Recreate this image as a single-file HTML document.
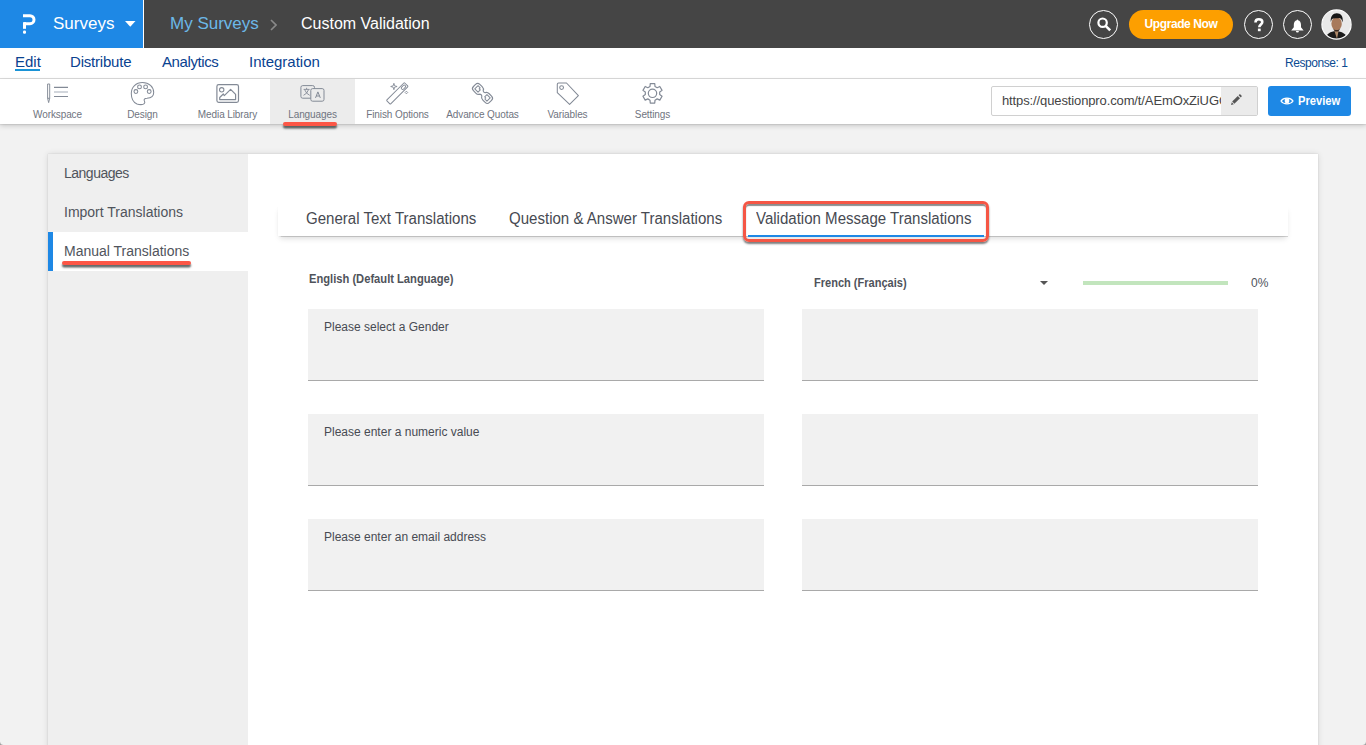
<!DOCTYPE html>
<html><head><meta charset="utf-8">
<style>
*{margin:0;padding:0;box-sizing:border-box}
html,body{width:1366px;height:745px;overflow:hidden;background:#f2f2f2;font-family:"Liberation Sans",sans-serif;position:relative}
.abs{position:absolute}
#top{left:0;top:0;width:1366px;height:48px;background:#454545}
#brand{left:0;top:0;width:143px;height:48px;background:#1e88e5}
#sep{left:143px;top:0;width:1px;height:48px;background:#fff}
.t{position:absolute;white-space:nowrap;line-height:1}
#nav{left:0;top:48px;width:1366px;height:31px;background:#fff;border-bottom:1px solid #dcdcdc}
#tool{left:0;top:79px;width:1366px;height:45px;background:#fff;box-shadow:0 1px 1px rgba(0,0,0,.07), 0 2px 5px rgba(0,0,0,.16)}
.navt{color:#0a4290;font-size:15px}
.ti{position:absolute;top:0;width:85px;height:45px;text-align:center}
.ti .lbl{position:absolute;left:0;width:85px;top:31px;font-size:10px;letter-spacing:-0.1px;color:#6f7480;text-align:center;line-height:1}
.ti svg{position:absolute;left:0;top:0}
#card{left:48px;top:154px;width:1270px;height:600px;background:#fff;box-shadow:0 0 1px rgba(0,0,0,.18), 0 0 6px rgba(0,0,0,.12)}
#side{left:48px;top:154px;width:200px;height:600px;background:#efefef}
.si{font-size:14px;color:#50545c}
.box{position:absolute;width:456px;height:72px;background:#f1f1f1;border-bottom:1px solid #a9a9a9}
.bt{position:absolute;left:16px;top:12px;font-size:12px;color:#484b53;line-height:1}
.redline{position:absolute;height:4px;background:#fc5646;border-radius:2px;box-shadow:0 2.5px 2px rgba(40,50,50,.75)}
</style></head>
<body>
<div id="top" class="abs"></div>
<div id="brand" class="abs"></div>
<div id="sep" class="abs"></div>
<!-- logo P -->
<svg class="abs" style="left:0;top:0" width="40" height="40" viewBox="0 0 40 40">
<path d="M23 15.7 H30 A4 4 0 0 1 30 23.7 H24" fill="none" stroke="#fff" stroke-width="3"/>
<rect x="23" y="22.2" width="3" height="6.6" fill="#fff"/>
<rect x="23" y="30.6" width="3" height="3.2" rx="1.2" fill="#fff"/>
</svg>
<div class="t" style="left:53px;top:15px;font-size:17px;color:#fff">Surveys</div>
<svg class="abs" style="left:124.5px;top:21px" width="11" height="7"><path d="M0 0 H10.5 L5.25 5.8Z" fill="#fff"/></svg>
<div class="t" style="left:170px;top:15px;font-size:17px;color:#6cb8e8">My Surveys</div>
<svg class="abs" style="left:270px;top:19px" width="7" height="12"><path d="M1 1 L6 6 L1 11" fill="none" stroke="#8a8a8a" stroke-width="1.6"/></svg>
<div class="t" style="left:301px;top:16px;font-size:16px;color:#fff">Custom Validation</div>

<!-- top right -->
<div class="abs" style="left:1089px;top:10px;width:29px;height:29px;border:1.5px solid #fff;border-radius:50%"></div>
<svg class="abs" style="left:1096px;top:16px" width="17" height="17" viewBox="0 0 17 17"><circle cx="6.6" cy="6.7" r="4.2" fill="none" stroke="#fff" stroke-width="2.2"/><path d="M9.4 9.6 L14.2 14.4" stroke="#fff" stroke-width="2.6"/></svg>
<div class="abs" style="left:1129px;top:10px;width:104px;height:29px;border-radius:15px;background:#fd9f00"></div>
<div class="t" style="left:1129px;top:18px;width:104px;text-align:center;font-size:12px;letter-spacing:-0.4px;font-weight:bold;color:#fff">Upgrade Now</div>
<div class="abs" style="left:1244px;top:10px;width:29px;height:29px;border:1.5px solid #fff;border-radius:50%"></div>
<svg class="abs" style="left:1254px;top:18px" width="10" height="14" viewBox="0 0 10 14"><path d="M1.5 4.4 C1.5 2.2 3 1.3 4.8 1.3 C6.8 1.3 8.3 2.4 8.3 4.1 C8.3 6.6 5.3 6.6 5.3 9.3" fill="none" stroke="#fff" stroke-width="2.6"/><rect x="3.9" y="10.6" width="2.8" height="2.6" fill="#fff"/></svg>
<div class="abs" style="left:1283px;top:10px;width:29px;height:29px;border:1.5px solid #fff;border-radius:50%"></div>
<svg class="abs" style="left:1291px;top:18.5px" width="14" height="14" viewBox="0 0 14 14"><path d="M6.4 0.6 C6.8 0.6 7 1 7 1.3 C8.9 1.8 10 3.4 10 6 V8.2 L12.6 11.6 H0.2 L2.8 8.2 V6 C2.8 3.4 3.9 1.8 5.8 1.3 C5.8 1 6 0.6 6.4 0.6Z" fill="#fff"/><path d="M4.9 12 A1.5 1.5 0 0 0 7.9 12Z" fill="#fff"/></svg>
<svg class="abs" style="left:1321px;top:9px" width="31" height="31" viewBox="0 0 31 31">
<defs><clipPath id="avc"><circle cx="15.5" cy="15.5" r="14.5"/></clipPath></defs>
<g clip-path="url(#avc)">
<rect width="31" height="31" fill="#e9e9e9"/>
<path d="M4 31 C5 25 9 22.5 15 22 C21 22.5 26 25 27 31Z" fill="#1b1b1b"/>
<path d="M13.5 22 L17.5 22 L16 30 Z" fill="#b08a6a"/>
<ellipse cx="15.6" cy="14.8" rx="5.2" ry="6.8" fill="#a87a5c"/>
<path d="M9.8 13 C9.2 7 12 4.2 15.8 4.2 C19.8 4.2 22.5 7 21.6 13.5 C20.8 10.5 20 9.5 18.5 9 C16 9.5 12.5 9 11 10 C10.3 11 10.2 12 9.8 13Z" fill="#161616"/>
<path d="M12.3 19.8 C13.5 21.5 17.5 21.5 19 19.8 C18.5 21.8 17 22.6 15.6 22.6 C14.2 22.6 12.8 21.8 12.3 19.8Z" fill="#3a2a20"/>
</g>
<circle cx="15.5" cy="15.5" r="14.6" fill="none" stroke="#fff" stroke-width="1.2"/>
</svg>
<!-- nav -->
<div id="nav" class="abs"></div>
<div class="t navt" style="left:15px;top:54px">Edit</div>
<div class="abs" style="left:15px;top:69px;width:25px;height:2px;background:#1a93d6"></div>
<div class="t navt" style="left:70px;top:54px;letter-spacing:-0.2px">Distribute</div>
<div class="t navt" style="left:162px;top:54px;letter-spacing:-0.4px">Analytics</div>
<div class="t navt" style="left:249px;top:54px">Integration</div>
<div class="t" style="left:1285px;top:57px;font-size:12px;letter-spacing:-0.45px;color:#0b4a91">Response: 1</div>

<!-- toolbar -->
<div id="tool" class="abs">
  <div class="ti" style="left:15px"><div class="lbl">Workspace</div></div>
  <div class="ti" style="left:100px"><div class="lbl">Design</div></div>
  <div class="ti" style="left:185px"><div class="lbl">Media Library</div></div>
  <div class="ti" style="left:270px;background:#ececec"><div class="lbl">Languages</div></div>
  <div class="ti" style="left:355px"><div class="lbl">Finish Options</div></div>
  <div class="ti" style="left:440px"><div class="lbl">Advance Quotas</div></div>
  <div class="ti" style="left:525px"><div class="lbl">Variables</div></div>
  <div class="ti" style="left:610px"><div class="lbl">Settings</div></div>
</div>
<svg class="abs" style="left:0;top:0" width="700" height="124" viewBox="0 0 700 124">
<g fill="none" stroke="#838a96" stroke-width="1.05" stroke-linejoin="round">
  <!-- workspace -->
  <path d="M47.6 84 H49.7 V98.3 L48.65 102.6 L47.6 98.3 Z" stroke-width="0.95"/>
  <path d="M47.5 98.3 H49.8"/>
  <path d="M54 87.4 H68 M54 96.5 H68" stroke-width="1.2"/>
  <path d="M54 92 H68" stroke="#b4bac4" stroke-width="1.2"/>
  <!-- design palette -->
  <path d="M137 104 C133.5 102.5 131.3 98.5 131.3 93.5 C131.3 87 136 82.5 142.5 82.5 C149 82.5 153.7 87 153.7 92.5 C153.7 96 151 98 147 98.2 C144.5 98.2 143.5 99.8 144.5 101.3 C145.5 103 144 104.6 141 104.6 C139.5 104.6 138.2 104.4 137 104Z"/>
  <circle cx="139.5" cy="86.9" r="1.9"/><circle cx="145.6" cy="86.9" r="1.9"/>
  <circle cx="135.9" cy="91.5" r="1.9"/><circle cx="149.2" cy="91.5" r="1.9"/>
  <!-- media -->
  <rect x="216.9" y="84.6" width="21.6" height="17.8" rx="1.8" stroke-width="1.2"/>
  <circle cx="221.7" cy="89.8" r="2.2"/>
  <path d="M219.7 97.5 L223.3 94 L224.3 95.6 L230.6 89.3 L235.6 94.3 V99.6 H219.7 Z" stroke-width="1.2"/>
  <!-- languages -->
  <rect x="300.9" y="85.6" width="13.6" height="12.6" rx="1.8" fill="#ececec" stroke-width="1"/>
  <rect x="310.8" y="88.6" width="13.2" height="12.6" rx="1.8" fill="#ececec" stroke-width="1"/>
  <path d="M306.6 87.8 V89.2 M303.6 89.4 H309.6 M304.6 89.6 Q306.3 94 309.7 95.3 M308.6 89.6 Q307 94 303.5 95.3" stroke-width="0.9"/>
  <path d="M315.5 97.9 L317.9 91.9 L320.3 97.9 M316.3 96 H319.5" stroke-width="1"/>
  <!-- finish options wand -->
  <g transform="translate(397.3 93.4) rotate(-45)" stroke-width="1">
    <rect x="-12.6" y="-2.7" width="25.2" height="5.4" rx="0.6"/>
    <rect x="6.2" y="-1.4" width="5" height="2.8" rx="1.4"/>
  </g>
  <path d="M393.9 83.3 L394.6 85.8 L397.1 86.5 L394.6 87.2 L393.9 89.7 L393.2 87.2 L390.7 86.5 L393.2 85.8 Z" stroke-width="0.9"/>
  <path d="M406.4 91.2 L407.7 92.5 L406.4 93.8 L405.1 92.5 Z" stroke-width="0.9"/>
  <!-- advance quotas chain -->
  <g transform="translate(482.5 93.4) rotate(-45)" stroke-width="1.15">
    <path d="M-1.5 -11.3 H1.5 Q4.5 -11.3 4.5 -8.3 V-5 Q4.5 -2.2 2.3 -1.3 Q1.4 0 2.3 1.3 Q4.5 2.2 4.5 5 V8.3 Q4.5 11.3 1.5 11.3 H-1.5 Q-4.5 11.3 -4.5 8.3 V5 Q-4.5 2.2 -2.3 1.3 Q-1.4 0 -2.3 -1.3 Q-4.5 -2.2 -4.5 -5 V-8.3 Q-4.5 -11.3 -1.5 -11.3Z"/>
    <path d="M-2.3 -8.6 H2.3 V-5.6 H0.9 V-4 H-2.3 Z" stroke-width="1"/>
    <path d="M2.3 8.6 H-2.3 V5.6 H-0.9 V4 H2.3 Z" stroke-width="1"/>
  </g>
  <!-- variables tag -->
  <path d="M557.3 84.3 A1.3 1.3 0 0 1 558.6 83 H566.5 L578.4 95.7 L569.6 104.4 L557.3 92.7 Z" stroke-width="1.05"/>
  <circle cx="561.6" cy="87.6" r="1.9"/>
  <!-- settings gear -->
  <path d="M650.00 86.44 L650.25 83.56 L654.75 83.56 L655.00 86.44 L657.19 87.71 L659.81 86.48 L662.06 90.38 L659.69 92.03 L659.69 94.57 L662.06 96.22 L659.81 100.12 L657.19 98.89 L655.00 100.16 L654.75 103.04 L650.25 103.04 L650.00 100.16 L647.81 98.89 L645.19 100.12 L642.94 96.22 L645.31 94.57 L645.31 92.03 L642.94 90.38 L645.19 86.48 L647.81 87.71Z" stroke-width="1.2"/>
  <circle cx="652.5" cy="93.3" r="4.2" stroke-width="1.2"/>
</g>
</svg>
<div class="redline" style="left:283px;top:122px;width:54px"></div>

<!-- url + preview -->
<div class="abs" style="left:991px;top:86px;width:267px;height:30px;border:1px solid #d0d0d0;background:#fff;border-radius:2px"></div>
<div class="abs" style="left:1221px;top:87px;width:36px;height:28px;background:#ebebeb"></div>
<div class="t" style="left:1002px;top:94px;font-size:13px;letter-spacing:-0.12px;color:#444;width:219px;overflow:hidden">https://questionpro.com/t/AEmOxZiUGC</div>
<div class="abs" style="left:1268px;top:86px;width:83px;height:30px;background:#1e88e5;border-radius:3px"></div>
<div class="t" style="left:1298px;top:94px;font-size:13px;font-weight:bold;color:#fff;transform:scaleX(0.86);transform-origin:0 0">Preview</div>
<svg class="abs" style="left:1280px;top:96px" width="14" height="10" viewBox="0 0 14 10"><path d="M1 5 C3.5 1.2 10.5 1.2 13 5 C10.5 8.8 3.5 8.8 1 5Z" fill="none" stroke="#fff" stroke-width="1.3"/><circle cx="7" cy="5" r="2.4" fill="#fff"/></svg>
<svg class="abs" style="left:1230px;top:94px" width="12" height="12" viewBox="0 0 12 12"><path d="M2.2 7.6 L7.8 2 L10 4.2 L4.4 9.8 Z" fill="#555"/><path d="M8.6 1.2 L9.2 0.6 A0.9 0.9 0 0 1 10.5 0.6 L11.4 1.5 A0.9 0.9 0 0 1 11.4 2.8 L10.8 3.4 Z" fill="#555"/><path d="M1.8 8.2 L3.8 10.2 L1 11 Z" fill="#555"/></svg>

<!-- card -->
<div id="card" class="abs"></div>
<div id="side" class="abs"></div>
<div class="abs" style="left:48px;top:232px;width:200px;height:39px;background:#fff"></div>
<div class="abs" style="left:48px;top:232px;width:5px;height:39px;background:#1e88e5"></div>
<div class="t si" style="left:64px;top:166px;letter-spacing:-0.5px">Languages</div>
<div class="t si" style="left:64px;top:205px">Import Translations</div>
<div class="t si" style="left:64px;top:244px">Manual Translations</div>
<div class="redline" style="left:62px;top:261px;width:129px"></div>

<!-- tabs -->
<div class="abs" style="left:278px;top:205px;width:1010px;height:31px;background:#fff;box-shadow:-1px 1px 1px -1px rgba(0,0,0,.06), 0 1px 1px -0.5px rgba(0,0,0,.15), 0 4px 6px -2px rgba(0,0,0,.16)"></div>
<div class="t" style="left:306px;top:211px;font-size:16px;color:#474a52;transform:scaleX(0.94);transform-origin:0 0">General Text Translations</div>
<div class="t" style="left:509px;top:211px;font-size:16px;color:#474a52;transform:scaleX(0.94);transform-origin:0 0">Question &amp; Answer Translations</div>
<div class="t" style="left:756px;top:211px;font-size:16px;color:#474a52;transform:scaleX(0.94);transform-origin:0 0">Validation Message Translations</div>
<div class="abs" style="left:748px;top:235px;width:236px;height:2px;background:#1e88e5"></div>
<div class="abs" style="left:743px;top:201px;width:246px;height:41px;border:3px solid #f55645;border-radius:6px;box-shadow:0 2px 2px rgba(0,0,0,.5), inset 0 2px 1px rgba(0,0,0,.45)"></div>

<!-- form -->
<div class="t" style="left:309px;top:273px;font-size:12px;font-weight:bold;color:#4f535b;transform:scaleX(0.93);transform-origin:0 0">English (Default Language)</div>
<div class="t" style="left:814px;top:277px;font-size:12px;font-weight:bold;color:#4f535b;transform:scaleX(0.92);transform-origin:0 0">French (Français)</div>
<svg class="abs" style="left:1040px;top:281px" width="8" height="5"><path d="M0 0 H8 L4 4Z" fill="#555"/></svg>
<div class="abs" style="left:1083px;top:281px;width:145px;height:4px;background:#c2e5bd"></div>
<div class="t" style="left:1251px;top:277px;font-size:12px;color:#4f535b">0%</div>

<div class="box" style="left:308px;top:309px"><div class="bt">Please select a Gender</div></div>
<div class="box" style="left:802px;top:309px"></div>
<div class="box" style="left:308px;top:414px"><div class="bt">Please enter a numeric value</div></div>
<div class="box" style="left:802px;top:414px"></div>
<div class="box" style="left:308px;top:519px"><div class="bt">Please enter an email address</div></div>
<div class="box" style="left:802px;top:519px"></div>
<div class="abs" style="left:0;top:741px;width:4px;height:4px;background:radial-gradient(circle at 4px 0, rgba(0,0,0,0) 3.5px, #a0a0a0 4.8px)"></div>
<div class="abs" style="left:1362px;top:741px;width:4px;height:4px;background:radial-gradient(circle at 0 0, rgba(0,0,0,0) 3.5px, #a0a0a0 4.8px)"></div>
</body></html>
